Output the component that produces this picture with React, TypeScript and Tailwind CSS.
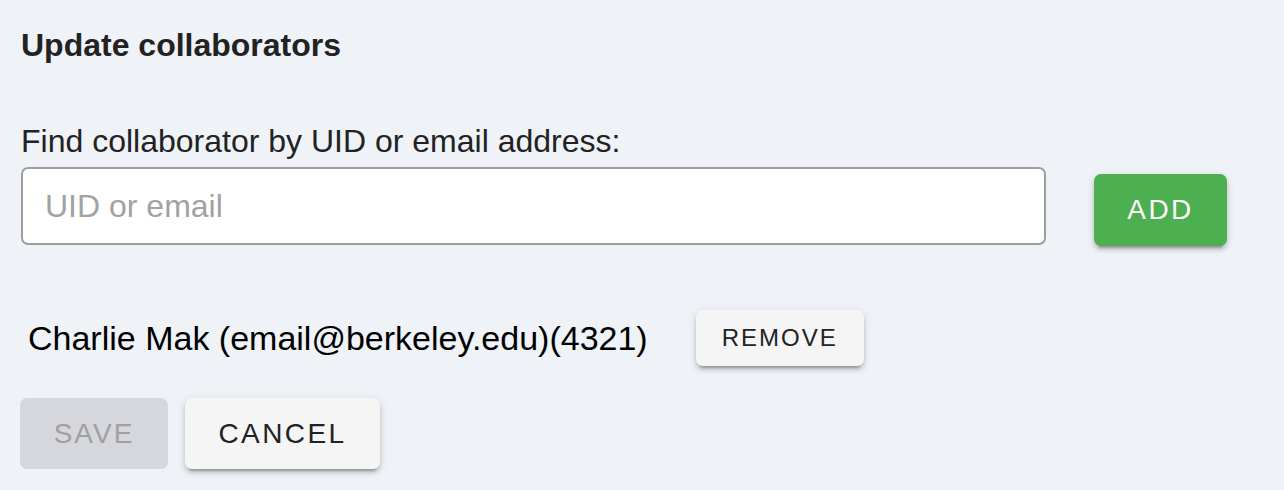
import React, { useState } from 'react';

const shadow =
  'shadow-[0_6px_2px_-4px_rgba(0,0,0,0.2),0_4px_4px_0_rgba(0,0,0,0.14),0_2px_10px_0_rgba(0,0,0,0.12)]';

const App: React.FC = () => {
  const [query, setQuery] = useState('');

  return (
    <div className="min-h-screen w-full bg-[#eff2f7] font-['Liberation_Sans',Arial,sans-serif] text-[#222]">
      <div className="px-[21px] pt-[27px]">
        <h2 className="text-[32px] leading-[37px] font-bold text-[#222]">Update collaborators</h2>

        <label htmlFor="collab" className="mt-[59px] block text-[32px] leading-[37px] text-[#222]">
          Find collaborator by UID or email address:
        </label>
        <div className="mt-[7px] flex items-start">
          <input
            id="collab"
            value={query}
            onChange={(e) => setQuery(e.target.value)}
            placeholder="UID or email"
            className="h-[78px] w-[1025px] rounded-[7px] border-2 border-[#9e9e9e] bg-white px-[22px] text-[32px] text-[#222] placeholder:text-[#a2a2a2] focus:outline-none"
          />
          <button
            className={`ml-[48px] mt-[7px] h-[72px] w-[133px] rounded-[7px] bg-[#4caf50] text-[28px] tracking-[2.4px] text-white ${shadow}`}
          >
            ADD
          </button>
        </div>

        <div className="mt-[64px] flex items-center pl-[7px]">
          <span className="text-[34px] leading-[40px] text-black">Charlie Mak (email@berkeley.edu)(4321)</span>
          <button
            className={`ml-[48px] h-[56px] w-[168px] rounded-[7px] bg-[#f5f5f5] text-[24px] tracking-[2px] text-[#222] ${shadow}`}
          >
            REMOVE
          </button>
        </div>

        <div className="mt-[32px] flex gap-[17px]">
          <button
            disabled
            className="-ml-px h-[71px] w-[148px] rounded-[7px] bg-[#d5d7dc] text-[28px] tracking-[2px] text-[#a0a0a0]"
          >
            SAVE
          </button>
          <button
            className={`h-[71px] w-[195px] rounded-[7px] bg-[#f5f5f5] text-[28px] tracking-[2.4px] text-[#222] ${shadow}`}
          >
            CANCEL
          </button>
        </div>
      </div>
    </div>
  );
};

export default App;
